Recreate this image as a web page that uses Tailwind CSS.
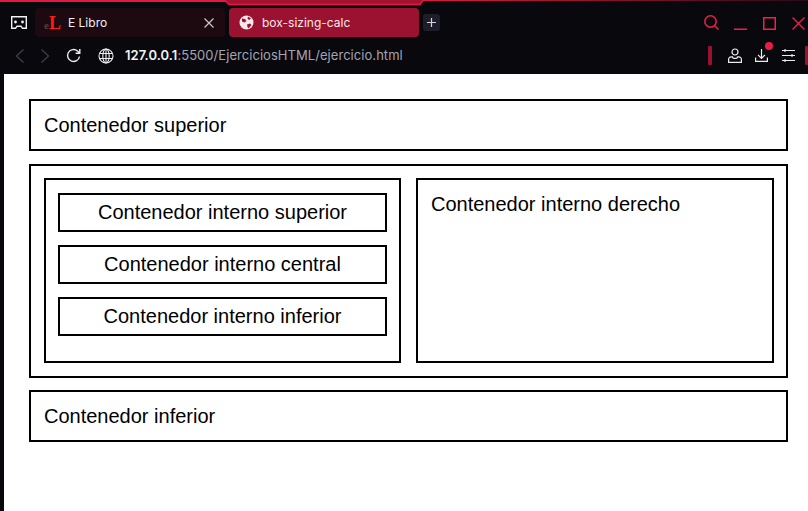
<!DOCTYPE html>
<html lang="en">
<head>
  <meta charset="UTF-8" />
  <title>box-sizing-calc</title>
  <script src="https://cdn.jsdelivr.net/npm/@tailwindcss/browser@4"></script>
</head>
<body class="w-[808px] h-[511px] overflow-hidden bg-[#08080d] flex flex-col font-['Inter',sans-serif]">

  <!-- Browser chrome -->
  <div class="relative h-[74px] shrink-0">
    <!-- red accent line over the tabs -->
    <svg class="absolute left-0 top-0" width="808" height="6" viewBox="0 0 808 6">
      <defs>
        <linearGradient id="fade" x1="0" x2="1" y1="0" y2="0">
          <stop offset="0" stop-color="#e01a45" />
          <stop offset="1" stop-color="#2a0a14" />
        </linearGradient>
      </defs>
      <rect x="0" y="0" width="226" height="2" fill="#e01a45" />
      <rect x="422" y="0" width="386" height="1" fill="url(#fade)" />
      <path d="M225 0L229 4.500H420L423 0z" fill="#a3132f" />
      <path d="M225 0.500L229 4.500H420L423 0.500" fill="none" stroke="#e01a45" stroke-width="1.500" />
    </svg>

    <!-- Tab row -->
    <div class="flex items-center h-[37px] pt-[8px]">
      <div class="w-[35px] pl-[11px]">
        <svg class="block" width="16" height="13" viewBox="0 0 16 13" fill="none" stroke="#f2f2f4" stroke-width="1.400">
          <path d="M.7 .7h14.600v11.600h-3.800l-1.500-2H6l-1.500 2H.7z" />
          <circle cx="4.500" cy="6" r="1.400" fill="#f2f2f4" stroke="none" />
          <circle cx="11.500" cy="6" r="1.400" fill="#f2f2f4" stroke="none" />
        </svg>
      </div>
      <div class="w-[190px] h-[29px] rounded-[4px] bg-[#1d0910] flex items-center pl-[9px] pr-[11px] text-[12px] text-[#f0f0f2]">
        <span class="w-[16px] mr-[8px] font-['Liberation_Serif',serif] font-bold leading-none whitespace-nowrap"><span class="text-[11px] text-[#54403f]">e</span><span class="text-[18px] text-[#ff1a1a]">L</span></span>
        <span class="flex-1">E Libro</span>
        <svg width="10" height="10" viewBox="0 0 10 10" stroke="#c9c9d0" stroke-width="1.200"><path d="M.5 .5l9 9M9.500 .5l-9 9" /></svg>
      </div>
      <div class="w-[190px] h-[29px] ml-[4px] rounded-[4px] bg-[#9b1230] flex items-center pl-[10px] text-[12px] text-[#f5e9ec]">
        <svg class="mr-[8px]" width="15" height="15" viewBox="0 0 15 15">
          <circle cx="7.500" cy="7.500" r="7" fill="#f5e9ec" />
          <path d="M3 3.500l3 .5 1.500 2-2 1.500-2.500-1zM8 9.500l3-1 1.500 1.500-3 3.500-1-1.500zM9 1.500l3 2-2 1.500-1.500-1.500z" fill="#9b1230" />
        </svg>
        <span>box-sizing-calc</span>
      </div>
      <div class="w-[17px] h-[17px] ml-[4px] rounded-[3px] bg-[#1e1e2b] flex items-center justify-center">
        <svg width="9" height="9" viewBox="0 0 9 9" stroke="#d5d5dc" stroke-width="1.200"><path d="M4.500 0v9M0 4.500h9" /></svg>
      </div>
      <!-- Window controls -->
      <div class="ml-auto flex items-center pr-[3px] text-[#f01f4b]">
        <svg width="15" height="15" viewBox="0 0 15 15" fill="none" stroke="currentColor" stroke-width="1.500"><circle cx="6.500" cy="6.500" r="5.700" /><path d="M10.800 10.800l3.700 3.700" /></svg>
        <svg class="ml-[15px] mt-[2px]" width="13" height="13" viewBox="0 0 13 13" stroke="currentColor" stroke-width="1.500"><path d="M0 12.250h13" /></svg>
        <svg class="ml-[16px] mt-[1px]" width="13" height="13" viewBox="0 0 13 13" fill="none" stroke="currentColor" stroke-width="1.500"><rect x=".75" y=".75" width="11.500" height="11.500" /></svg>
        <svg class="ml-[16px] mt-[1px]" width="13" height="13" viewBox="0 0 13 13" stroke="currentColor" stroke-width="1.400"><path d="M.5 .5l12 12M12.500 .5l-12 12" /></svg>
      </div>
    </div>

    <!-- Address row -->
    <div class="flex items-center h-[37px]">
      <svg class="ml-[15px]" width="9" height="14" viewBox="0 0 9 14" fill="none" stroke="#3f3f48" stroke-width="1.300"><path d="M8.500 .5L1.500 7l7 6.500" /></svg>
      <svg class="ml-[17px]" width="9" height="14" viewBox="0 0 9 14" fill="none" stroke="#3f3f48" stroke-width="1.300"><path d="M.5 .5L7.500 7l-7 6.500" /></svg>
      <svg class="ml-[16px]" width="15" height="15" viewBox="0 0 15 15" fill="none" stroke="#ececf0" stroke-width="1.400"><path d="M13.500 8.500A6 6 0 1 1 11.500 3l2 2" /><path d="M13.800 1v4.300H9.600" /></svg>
      <svg class="ml-[17px]" width="16" height="16" viewBox="0 0 16 16" fill="none" stroke="#ececf0" stroke-width="1.100"><circle cx="8" cy="8" r="7" /><ellipse cx="8" cy="8" rx="3.200" ry="7" /><path d="M1.500 5.500h13M1.500 10.500h13M8 1v14" /></svg>
      <span class="ml-[11px] text-[13px] tracking-[0.05px] text-[#a5a5b2]"><span class="font-semibold text-[#f2f2f5]">127.0.0.1</span>:5500/EjerciciosHTML/ejercicio.html</span>
      <div class="ml-auto flex items-center">
        <div class="w-[4px] h-[19px] rounded-[1px] bg-[#9b1230]"></div>
        <svg class="ml-[16px]" width="14" height="15" viewBox="0 0 14 15" fill="none" stroke="#ececf0" stroke-width="1.200"><circle cx="7" cy="4" r="3" /><path d="M.6 14.400v-3a2.500 2.500 0 0 1 2.500-2.500h1.400c0 2 5 2 5 0h1.400a2.500 2.500 0 0 1 2.500 2.500v3z" /></svg>
        <div class="relative ml-[13px]">
          <svg class="block" width="13" height="13" viewBox="0 0 13 13" fill="none" stroke="#ececf0" stroke-width="1.200"><path d="M6.500 0v9M3 5.800L6.500 9.300 10 5.800M.6 8.500v3.900h11.800v-3.900" /></svg>
          <div class="absolute left-[10px] top-[-7px] w-[8px] h-[8px] rounded-full bg-[#ea1d48]"></div>
        </div>
        <svg class="ml-[14px]" width="13" height="13" viewBox="0 0 13 13" fill="none" stroke="#ececf0" stroke-width="1.200"><path d="M0 1.500h13M0 6.500h13M0 11.500h13" /><path d="M3 .3v2.400M10 5.300v2.400M3 10.300v2.400" stroke-width="1.500" /></svg>
        <div class="ml-[10px] w-[3px] h-[19px] rounded-[1px] bg-[#9b1230]"></div>
      </div>
    </div>
  </div>

  <!-- Page content -->
  <div class="flex-1 ml-[4px] bg-white pt-[25px] px-[25px] font-['Liberation_Sans',sans-serif] text-[20px] leading-[23px] text-black">
    <div class="w-[759px] flex flex-col">
      <div class="h-[52px] border-2 border-black p-[13px]">Contenedor superior</div>

      <div class="h-[214px] mt-[13px] border-2 border-black pt-[12px] pl-[13px] flex gap-[15px]">
        <div class="w-[357px] h-[185px] border-2 border-black pt-[13px] pl-[12px] flex flex-col gap-[13px]">
          <div class="w-[329px] h-[39px] border-2 border-black flex items-center justify-center">Contenedor interno superior</div>
          <div class="w-[329px] h-[39px] border-2 border-black flex items-center justify-center">Contenedor interno central</div>
          <div class="w-[329px] h-[39px] border-2 border-black flex items-center justify-center">Contenedor interno inferior</div>
        </div>
        <div class="w-[358px] h-[185px] border-2 border-black p-[13px]">Contenedor interno derecho</div>
      </div>

      <div class="h-[52px] mt-[12px] border-2 border-black p-[13px]">Contenedor inferior</div>
    </div>
  </div>

</body>
</html>
